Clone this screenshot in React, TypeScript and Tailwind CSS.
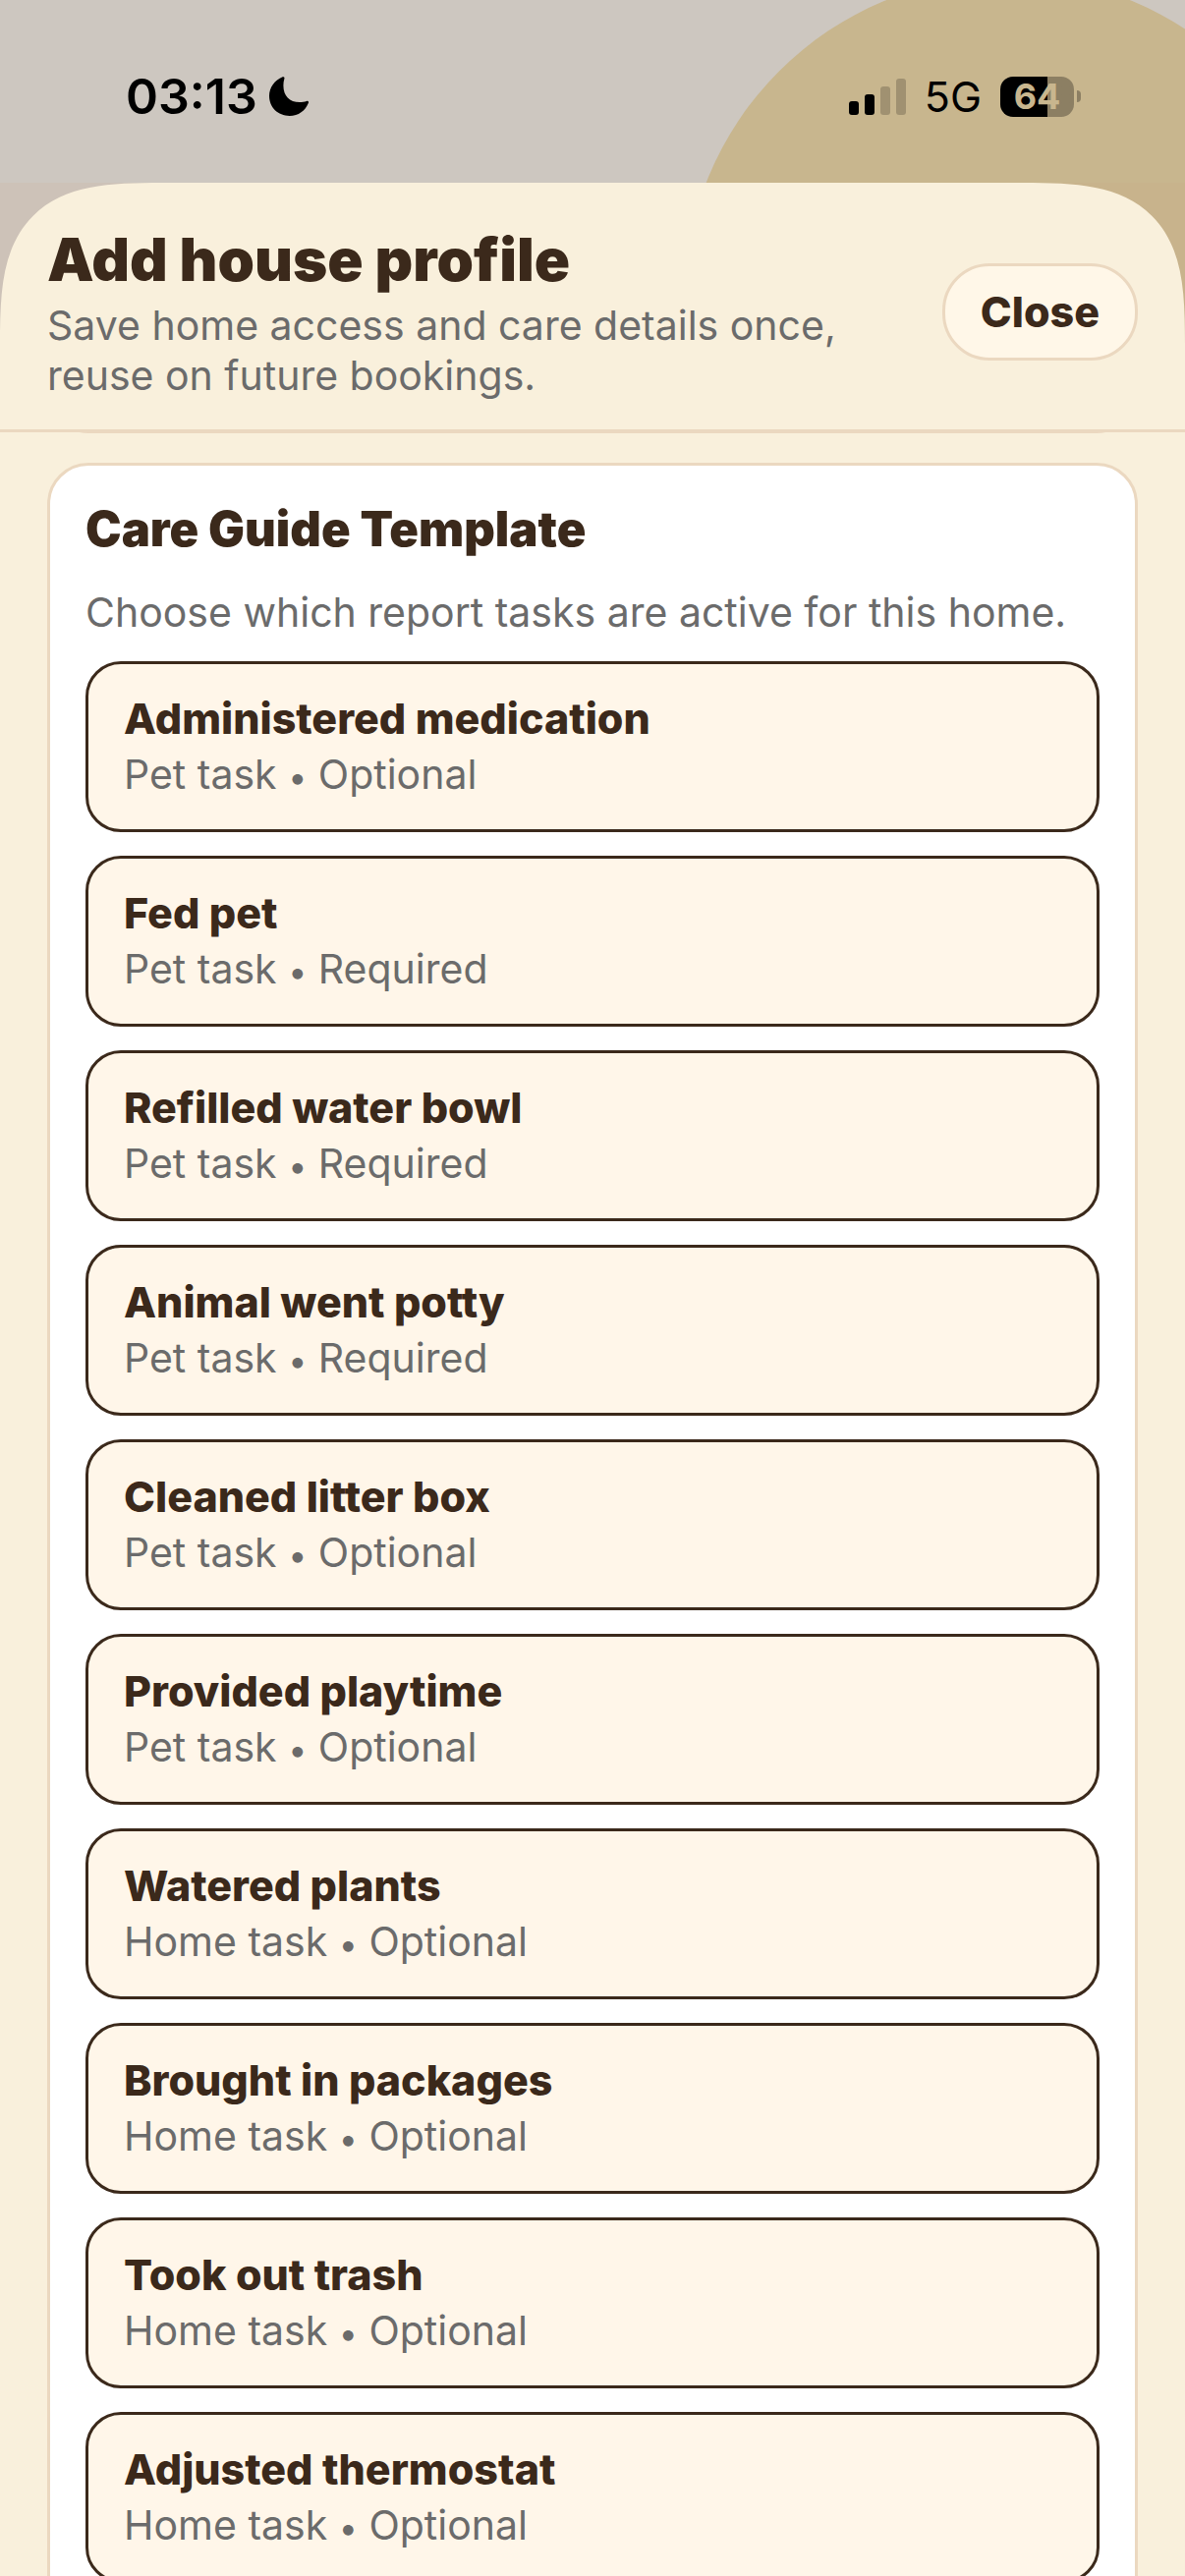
import { useState } from "react";

type Task = {
  title: string;
  scope: "Pet task" | "Home task";
  rule: "Optional" | "Required";
};

const tasks: Task[] = [
  { title: "Administered medication", scope: "Pet task", rule: "Optional" },
  { title: "Fed pet", scope: "Pet task", rule: "Required" },
  { title: "Refilled water bowl", scope: "Pet task", rule: "Required" },
  { title: "Animal went potty", scope: "Pet task", rule: "Required" },
  { title: "Cleaned litter box", scope: "Pet task", rule: "Optional" },
  { title: "Provided playtime", scope: "Pet task", rule: "Optional" },
  { title: "Watered plants", scope: "Home task", rule: "Optional" },
  { title: "Brought in packages", scope: "Home task", rule: "Optional" },
  { title: "Took out trash", scope: "Home task", rule: "Optional" },
  { title: "Adjusted thermostat", scope: "Home task", rule: "Optional" },
];

const StatusBar = () => {
  return (
    <div className="relative flex h-[186px] items-start justify-between pt-[72px] pr-[106px] pl-32 text-black">
      <div className="flex h-[52px] items-center gap-3">
        <span className="text-[50px] leading-[52px] font-semibold">03:13</span>
        <svg viewBox="0 0 40 40" className="size-10" aria-hidden="true">
          <path
            d="M13.6 0.3C14.8-0.2 15.8 0.8 15.4 2C14.7 4.2 14.4 6.6 14.4 9C14.4 19.6 20.6 26.1 31 26.1C33.4 26.1 35.8 25.8 38 25C39.4 24.5 40.4 25.5 39.9 26.8C36.8 34.8 29.6 40 20.8 40C9 40 0 31.4 0 19.6C0 11.2 5.6 3.4 13.6 0.3Z"
            fill="currentColor"
          />
        </svg>
      </div>
      <div className="flex h-[52px] items-center gap-[19px]">
        <svg viewBox="0 0 58 38" className="h-[38px] w-[58px]" aria-hidden="true">
          <rect x="0" y="24" width="10" height="14" rx="3" />
          <rect x="16" y="17" width="10" height="21" rx="3" />
          <rect x="32" y="9" width="10" height="29" rx="3" opacity="0.2" />
          <rect x="48" y="1" width="10" height="37" rx="3" opacity="0.2" />
        </svg>
        <span className="text-[43px] leading-[52px]">5G</span>
        <div className="flex items-center gap-[3px]">
          <div className="flex h-[41px] w-[75px] items-center justify-center rounded-[13px] bg-linear-to-r from-black from-64% to-[#8c7f63] to-64% text-4xl font-bold text-[#c8b68e]">
            64
          </div>
          <div className="h-3 w-1 rounded-r-full bg-[#8c7f63]" />
        </div>
      </div>
    </div>
  );
};

const SheetHeader = () => {
  return (
    <header className="flex items-center justify-between border-b-3 border-[#ebd8c0] px-12 pt-10 pb-[29px]">
      <div>
        <h1 className="text-[60px] leading-[76px] font-black text-[#3b291b]">Add house profile</h1>
        <p className="mt-1 text-[41px] leading-[51px] text-[#6b6b6b]">
          Save home access and care details once,
          <br />
          reuse on future bookings.
        </p>
      </div>
      <button
        type="button"
        className="h-[99px] rounded-[48px] border-3 border-[#ebd8c0] bg-[#fff7e8] px-9 text-[43px] font-extrabold text-[#3b291b]"
      >
        Close
      </button>
    </header>
  );
};

const TaskCard = ({ task }: { task: Task }) => {
  const [active, setActive] = useState(true);

  return (
    <button
      type="button"
      aria-pressed={active}
      onClick={() => setActive(!active)}
      className={`flex w-full flex-col rounded-[36px] border-3 bg-[#fff6e9] px-9 py-[27px] text-left ${
        active ? "border-[#3b291b]" : "border-[#ebd8c0]"
      }`}
    >
      <span className="text-[43px] leading-[57px] font-extrabold text-[#3b291b]">{task.title}</span>
      <span className="text-[41px] leading-[57px] text-[#6b6b6b]">
        {task.scope} <span className="text-[34px] leading-none">•</span> {task.rule}
      </span>
    </button>
  );
};

const App = () => {
  return (
    <div className="relative flex h-screen flex-col overflow-hidden bg-[#cdc7c0] font-['Inter',sans-serif]">
      <div className="absolute -top-6 -right-[150px] size-[660px] rounded-full bg-[#c8b68e]" />
      <StatusBar />
      <div className="relative flex min-h-0 flex-1 flex-col bg-[#cda582]/12">
        <main className="flex min-h-0 flex-1 flex-col rounded-t-[120px] bg-[#f9f0dc] supports-[corner-shape:squircle]:rounded-t-[165px] supports-[corner-shape:squircle]:[corner-shape:superellipse(1.6)]">
          <SheetHeader />
          <div className="min-h-0 flex-1 overflow-y-auto [scrollbar-width:none]">
            {/* bottom edge of the section that is scrolled away */}
            <div className="flex h-px items-end overflow-hidden px-12">
              <div className="h-24 w-full shrink-0 rounded-b-[42px] border-3 border-[#ebd8c0] bg-white" />
            </div>
            <section className="mx-12 mt-[30px] rounded-[42px] border-3 border-[#ebd8c0] bg-white p-9">
              <h2 className="text-[49px] leading-[58px] font-black text-[#3b291b]">Care Guide Template</h2>
              <p className="mt-[30px] text-[41px] leading-[51px] text-[#6b6b6b]">
                Choose which report tasks are active for this home.
              </p>
              <div className="mt-6 flex flex-col gap-6">
                {tasks.map((task) => (
                  <TaskCard key={task.title} task={task} />
                ))}
              </div>
            </section>
          </div>
        </main>
      </div>
    </div>
  );
};

export default App;
